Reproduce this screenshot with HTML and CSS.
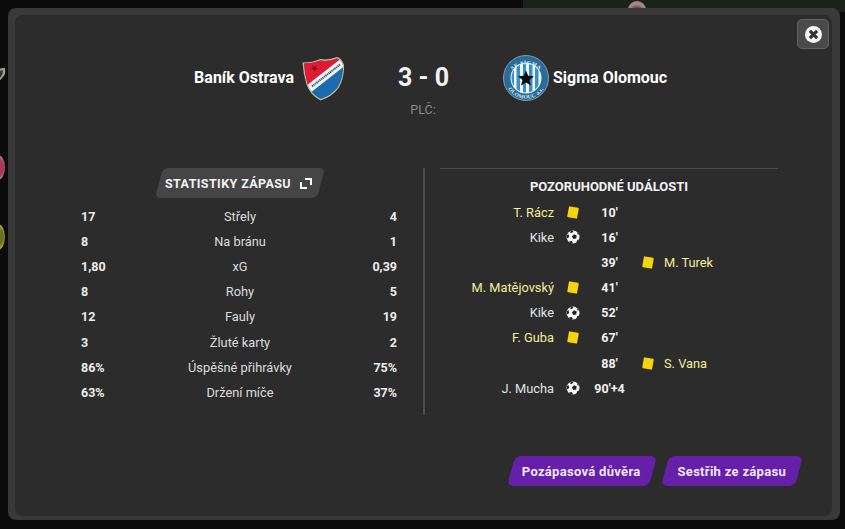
FILE: index.html
```html
<!DOCTYPE html>
<html lang="cs">
<head>
<meta charset="utf-8">
<title>Baník Ostrava - Sigma Olomouc</title>
<link rel="stylesheet" href="styles.css">
</head>
<body>
<div class="backdrop-top"></div>
<div class="peek peek-top"></div>
<svg class="peek peek-shield" viewBox="0 0 10 24"><path d="M-6 2 L8 0 Q10 8 7 13 Q3 19 -3 23 Z" fill="#a89c72"/><path d="M-6 6 L5 4 Q5 10 1 16Z" fill="#1d3a52"/></svg>
<div class="peek peek-pink"></div>
<div class="peek peek-yellow"></div>
<main class="modal">
  <div class="panel">
    <button class="close" aria-label="Zavřít">
      <svg viewBox="0 0 16 16" width="17" height="17"><circle cx="8" cy="8" r="8" fill="#f6f6f6"/><path d="M4.6 4.6l6.8 6.8M11.4 4.6l-6.8 6.8" stroke="#333" stroke-width="3"/></svg>
    </button>
    <header class="match">
      <div class="team team-home">
        <span class="team-name">Baník Ostrava</span>
        <svg class="crest" viewBox="0 0 42 46" width="42" height="46">
          <defs>
            <clipPath id="shield"><path d="M2 8.500 Q11 8.500 18 5.500 Q27 7 35 3.500 Q39 5 41 10 Q41.500 22 36 32 Q29 41 18.500 44 Q9 39 5.500 29 Q2.500 18 2 8.500Z"/></clipPath>
          </defs>
          <path d="M.5 7.500 Q11 7.500 18 4 Q27 5.500 35 2 Q40 3.500 42 10 Q42.500 22 37 32.500 Q30 42 18.500 45.500 Q8 40 4.500 29.500 Q1 18 .5 7.500Z" fill="#cbb98f"/>
          <g clip-path="url(#shield)">
            <rect width="42" height="46" fill="#1a6cae"/>
            <path d="M0 0H42V1.300L0 34Z" fill="#e01a32"/>
            <path d="M0 34L42 1.300V11.400L0 44.200Z" fill="#f4f4f0"/>
          </g>
          <path d="M10 31.400L38 9.600" stroke="#26508c" stroke-width="2" stroke-dasharray="1.200 .7"/>
          <path d="M10 10.500l2.500 1.300 1.700-1.900-.3 2.700 2.200 1.300-2.600.5-.7 2.400-1.200-2.300-2.500 0 1.800-1.900z" fill="#8a1422"/>
        </svg>
      </div>
      <div class="score-box">
        <div class="score">3 - 0</div>
        <div class="league">PLČ:</div>
      </div>
      <div class="team team-away">
        <svg class="crest" viewBox="0 0 46 46" width="46" height="46">
          <defs>
            <clipPath id="inner"><circle cx="23" cy="23" r="14.500"/></clipPath>
            <path id="ring-top" d="M5.500 25a17.600 17.600 0 0 1 35 0"/>
            <path id="ring-bottom" d="M2.500 27a20.900 20.900 0 0 0 41 0"/>
          </defs>
          <circle cx="23" cy="23" r="22.500" fill="#286c9c" stroke="#8f9ba3" stroke-width="1"/>
          <circle cx="23" cy="23" r="15.500" fill="#eef6fb"/>
          <g clip-path="url(#inner)" fill="#3a8fc6">
            <rect x="8" y="8" width="3" height="30"/><rect x="13.500" y="8" width="3.500" height="30"/><rect x="20" y="8" width="3" height="30"/><rect x="26" y="8" width="3.500" height="30"/><rect x="32" y="8" width="3.500" height="30"/>
          </g>
          <path d="M23 15.500l2.200 5.300 5.800.4-4.500 3.700 1.500 5.600-5-3.100-5 3.100 1.500-5.600-4.500-3.700 5.800-.4z" fill="#0d0d0d"/>
          <text class="crest-text"><textPath href="#ring-top" startOffset="50%">SK SIGMA</textPath></text>
          <text class="crest-text"><textPath href="#ring-bottom" startOffset="50%">OLOMOUC a.s.</textPath></text>
        </svg>
        <span class="team-name">Sigma Olomouc</span>
      </div>
    </header>

    <section class="details">
      <div class="stats">
        <div class="stats-head">
          <button class="pill">
            <span>STATISTIKY ZÁPASU</span>
            <svg viewBox="0 0 12 12" width="12" height="12" fill="none" stroke="#fff" stroke-width="2"><path d="M5 2H11V8M1 5V11H7"/></svg>
          </button>
        </div>
        <div class="stat-row"><b>17</b><span>Střely</span><b>4</b></div>
        <div class="stat-row"><b>8</b><span>Na bránu</span><b>1</b></div>
        <div class="stat-row"><b>1,80</b><span>xG</span><b>0,39</b></div>
        <div class="stat-row"><b>8</b><span>Rohy</span><b>5</b></div>
        <div class="stat-row"><b>12</b><span>Fauly</span><b>19</b></div>
        <div class="stat-row"><b>3</b><span>Žluté karty</span><b>2</b></div>
        <div class="stat-row"><b>86%</b><span>Úspěšné přihrávky</span><b>75%</b></div>
        <div class="stat-row"><b>63%</b><span>Držení míče</span><b>37%</b></div>
      </div>

      <div class="events">
        <h2 class="events-title">POZORUHODNÉ UDÁLOSTI</h2>
        <div class="event"><span class="who carded">T. Rácz</span><i class="card"></i><b class="min">10'</b></div>
        <div class="event"><span class="who">Kike</span><svg class="ball" viewBox="0 0 14 14"><use href="#ball"/></svg><b class="min">16'</b></div>
        <div class="event"><span class="who"></span><i class="slot"></i><b class="min">39'</b><i class="card"></i><span class="who-right carded">M. Turek</span></div>
        <div class="event"><span class="who carded">M. Matějovský</span><i class="card"></i><b class="min">41'</b></div>
        <div class="event"><span class="who">Kike</span><svg class="ball" viewBox="0 0 14 14"><use href="#ball"/></svg><b class="min">52'</b></div>
        <div class="event"><span class="who carded">F. Guba</span><i class="card"></i><b class="min">67'</b></div>
        <div class="event"><span class="who"></span><i class="slot"></i><b class="min">88'</b><i class="card"></i><span class="who-right carded">S. Vana</span></div>
        <div class="event"><span class="who">J. Mucha</span><svg class="ball" viewBox="0 0 14 14"><use href="#ball"/></svg><b class="min">90'+4</b></div>
      </div>
    </section>

    <footer class="actions">
      <button class="action">Pozápasová důvěra</button>
      <button class="action">Sestřih ze zápasu</button>
    </footer>
  </div>
</main>
<svg class="defs" width="0" height="0">
  <symbol id="ball" viewBox="0 0 14 14">
    <circle cx="7" cy="7" r="6.500" fill="#f4f4f4"/>
    <path d="M8 4.200l2.700 1.400-.5 2.900-2.800.5-1.500-2.500z" fill="#222"/>
    <path d="M5 .8L7.500 1 6 3 4 2.500zM.8 5l1.800-.7.6 2.700-2.200 1.500zM3 11.500l2.700-.5 1.300 2.300-2.300.3zM11 10.600l1.800-1-.6 2.200-1.700 1.200zM11 1.800l2 3-1.500-.5z" fill="#222"/>
  </symbol>
</svg>
</body>
</html>
```
FILE: styles.css
```css
* { box-sizing: border-box; }
html, body { margin: 0; height: 100%; }
body {
  width: 845px;
  height: 529px;
  overflow: hidden;
  position: relative;
  background: #0b0b0b;
  font-family: Roboto, "Liberation Sans", sans-serif;
  color: #e6e6e6;
  font-size: 13px;
}
.backdrop-top { position: absolute; left: 523px; top: 0; width: 322px; height: 12px; background: #1b221c; }
.peek { position: absolute; }
.peek-top { left: 628px; top: 1px; width: 18px; height: 18px; border-radius: 50%; background: radial-gradient(circle at 50% 70%, #6d2230 0 30%, #9c8a8c 60%); }
.peek-shield { left: 0; top: 65px; width: 6px; height: 20px; }
.peek-pink { left: -9px; top: 155px; width: 14px; height: 25px; border-radius: 50%; background: radial-gradient(circle at 30% 50%, #a83a58 0 55%, #94828a 75%); }
.peek-yellow { left: -9px; top: 224px; width: 14px; height: 26px; border-radius: 50%; background: radial-gradient(circle at 30% 50%, #6f6e20 0 50%, #a6a436 75%); }
.defs { position: absolute; }

.modal {
  position: absolute;
  left: 8px;
  top: 8px;
  width: 832px;
  height: 512px;
  padding: 7px 8px 4px 7px;
  background: #393939;
  border-radius: 8px;
}
.panel {
  position: relative;
  height: 100%;
  background: #2c2c2c;
  border-radius: 8px;
}
.close {
  position: absolute;
  right: 3px;
  top: 4px;
  width: 32px;
  height: 30px;
  padding: 0;
  display: flex;
  align-items: center;
  justify-content: center;
  background: #4a4a4a;
  border: 1px solid #626262;
  border-radius: 5px;
}

.match {
  display: grid;
  grid-template-columns: 329px 159px 329px;
  padding-top: 40px;
  height: 153px;
}
.team { display: flex; align-items: flex-start; gap: 8px; }
.team-home { justify-content: flex-end; }
.team-name { font-size: 16px; font-weight: 700; color: #fff; line-height: 46px; }
.team-away { gap: 4px; }
.crest { display: block; flex: none; }
.crest-text { font: 700 5.500px "Liberation Serif", serif; fill: #d8e8f2; text-anchor: middle; letter-spacing: 0.3px; }
.score-box { text-align: center; }
.score { font-size: 25px; font-weight: 700; color: #f2f2f2; line-height: 46px; }
.league { font-size: 12.500px; color: #8a8a8a; line-height: 14px; margin-top: 2px; margin-left: -1px; }

.details { display: flex; padding-left: 66px; }
.stats { width: 316px; }
.stats-head { display: flex; justify-content: center; margin: 0 0 5.600px 0; }
.pill {
  position: relative;
  z-index: 0;
  display: flex;
  align-items: center;
  gap: 9px;
  width: 170px;
  height: 30px;
  padding: 0 0 0 10px;
  margin-left: 2px;
  border: 0;
  background: none;
  color: #f2f2f2;
  font: 700 12.500px Roboto, sans-serif;
  letter-spacing: 0.4px;
}
.pill::before {
  content: "";
  position: absolute;
  inset: 0 4px;
  z-index: -1;
  background: #454545;
  border-radius: 5px;
  transform: skewX(-15deg);
}
.stat-row {
  display: grid;
  grid-template-columns: 61px 1fr 59px;
  height: 25.200px;
  line-height: 25px;
  color: #dcdcdc;
  font-size: 12.800px;
}
.stat-row b { font-weight: 700; color: #ededed; font-size: 12.500px; }
.stat-row b:last-child { text-align: right; }
.stat-row span { text-align: center; }

.events {
  width: 354px;
  margin-left: 26px;
  padding-left: 15px;
  border-left: 2px solid #4c4c4c;
  height: 247px;
  position: relative;
}
.events::before {
  content: "";
  position: absolute;
  left: 15px;
  top: 0;
  width: 338px;
  height: 1px;
  background: #4c4c4c;
}
.events-title {
  margin: 0;
  width: 338px;
  text-align: center;
  font-size: 13px;
  font-weight: 700;
  color: #f2f2f2;
  line-height: 14px;
  padding-top: 12px;
  height: 31.700px;
}
.event {
  display: grid;
  grid-template-columns: 114px 37px 37px 36px auto;
  align-items: center;
  height: 25.140px;
  font-size: 12.800px;
}
.who { text-align: right; color: #e2e2e2; white-space: nowrap; }
.who-right { color: #e2e2e2; white-space: nowrap; }
.carded { color: #f2ee9a; }
.card {
  display: block;
  justify-self: center;
  width: 10px;
  height: 11px;
  background: #f6d40a;
  border-radius: 1px;
  transform: rotate(10deg);
}
.event > .card:nth-child(4) { justify-self: end; margin-right: 11px; }
.slot { display: block; }
.ball { display: block; justify-self: center; width: 14px; height: 14px; }
.min { font-size: 12.500px; font-weight: 700; color: #f2f2f2; white-space: nowrap; text-align: center; }

.actions {
  position: absolute;
  right: 30px;
  bottom: 30px;
  display: flex;
  gap: 5px;
}
.action {
  position: relative;
  z-index: 0;
  height: 30px;
  border: 0;
  background: none;
  padding: 0 16px;
  color: #efe6fb;
  font: 700 13px Roboto, sans-serif;
  letter-spacing: 0.3px;
  white-space: nowrap;
}
.action::before {
  content: "";
  position: absolute;
  inset: 0 3px;
  z-index: -1;
  background: #651fa8;
  border-radius: 6px;
  transform: skewX(-15deg);
}
.action:first-child::before { inset: 0 4px 0 5px; }
```
